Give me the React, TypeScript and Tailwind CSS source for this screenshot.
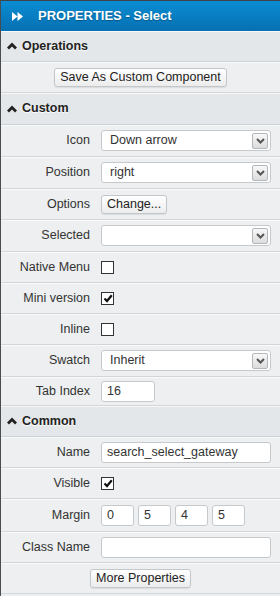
import React from 'react';

const font = { fontFamily: '"Liberation Sans", Arial, sans-serif' };

const SectionHeader = ({ title, h = 'h-[31px]' }: { title: string; h?: string }) => (
  <div className={`${h} flex items-center gap-[5px] pl-[6px] bg-[#e4e7e9] border-b border-[#cdd1d4] shadow-[inset_0_1px_0_#f7f8f9]`}>
    <svg width="10" height="8" viewBox="0 0 10 8">
      <path d="M1 6.5 L5 2.5 L9 6.5" fill="none" stroke="#222" strokeWidth="2.8" />
    </svg>
    <span className="text-[12.5px] font-bold text-[#222] [text-shadow:0_1px_1px_#fff]">{title}</span>
  </div>
);

const Row = ({ label, h = 'h-[31px]', children }: { label?: string; h?: string; children: React.ReactNode }) => (
  <div className={`${h} flex items-center bg-[#edeff0] border-b border-[#d3d6d9] shadow-[inset_0_1px_0_#f9fafa]`}>
    <div className="w-[89px] text-right text-[12.5px] text-[#333]">{label}</div>
    <div className="ml-[11px] flex items-center">{children}</div>
  </div>
);

const Select = ({ value }: { value: string }) => (
  <div className="w-[170px] h-[21px] bg-white border border-[#c6c9cc] rounded-[3px] flex items-center justify-between pl-[8px] pr-[2px]">
    <span className="text-[12.5px] text-[#333]">{value}</span>
    <span className="w-[16px] h-[16px] border border-[#b4b7ba] rounded-[2px] bg-gradient-to-b from-[#f8f8f8] to-[#dcdcdc] flex items-center justify-center">
      <svg width="9" height="6" viewBox="0 0 9 6">
        <path d="M1 1 L4.5 4.5 L8 1" fill="none" stroke="#555" strokeWidth="2" />
      </svg>
    </span>
  </div>
);

const Input = ({ value = '', w }: { value?: string; w: string }) => (
  <div className={`${w} h-[21px] bg-white border border-[#c6c9cc] rounded-[3px] flex items-center pl-[5px] text-[12.5px] text-[#333]`}>
    {value}
  </div>
);

const Check = ({ checked }: { checked?: boolean }) => (
  <span className="w-[13px] h-[13px] bg-white border border-[#333] flex items-center justify-center">
    {checked && (
      <svg width="10" height="9" viewBox="0 0 10 9">
        <path d="M1.5 4.5 L4 7 L8.8 1.2" fill="none" stroke="#111" strokeWidth="2.2" />
      </svg>
    )}
  </span>
);

const Button = ({ children }: { children: React.ReactNode }) => (
  <span className="h-[19px] px-[5px] flex items-center bg-gradient-to-b from-white to-[#ececec] border border-[#c4c7ca] rounded-[3px] text-[12.5px] text-[#222] shadow-[0_1px_1px_rgba(0,0,0,0.08)]">
    {children}
  </span>
);

export default function App() {
  return (
    <div className="w-[280px] h-[596px] bg-[#edeff0] border-l border-[#4a4d50] overflow-hidden" style={font}>
      <div className="h-[31px] border-t border-[#3f4346] bg-gradient-to-b from-[#0b8dd3] to-[#0670b2] flex items-center pl-[11px] gap-[15px]">
        <svg width="11" height="9" viewBox="0 0 11 9">
          <path d="M0 0 L5.5 4.5 L0 9 Z M5.5 0 L11 4.5 L5.5 9 Z" fill="#fff" />
        </svg>
        <span className="text-white font-bold text-[13px] [text-shadow:0_1px_1px_rgba(0,0,0,0.3)]">PROPERTIES - Select</span>
      </div>

      <SectionHeader title="Operations" />
      <div className="h-[31px] flex items-center justify-center bg-[#edeff0] border-b border-[#d3d6d9] shadow-[inset_0_1px_0_#f9fafa]">
        <Button>Save As Custom Component</Button>
      </div>

      <SectionHeader title="Custom" h="h-[32px]" />
      <Row label="Icon" h="h-[32px]"><Select value="Down arrow" /></Row>
      <Row label="Position" h="h-[32px]"><Select value="right" /></Row>
      <Row label="Options"><Button>Change...</Button></Row>
      <Row label="Selected" h="h-[32px]"><Select value="" /></Row>
      <Row label="Native Menu"><Check /></Row>
      <Row label="Mini version"><Check checked /></Row>
      <Row label="Inline"><Check /></Row>
      <Row label="Swatch" h="h-[32px]"><Select value="Inherit" /></Row>
      <Row label="Tab Index" h="h-[29px]"><Input value="16" w="w-[54px]" /></Row>

      <SectionHeader title="Common" />
      <Row label="Name"><Input value="search_select_gateway" w="w-[170px]" /></Row>
      <Row label="Visible"><Check checked /></Row>
      <Row label="Margin" h="h-[33px]">
        <div className="flex gap-[4px]">
          <Input value="0" w="w-[33px]" />
          <Input value="5" w="w-[33px]" />
          <Input value="4" w="w-[33px]" />
          <Input value="5" w="w-[33px]" />
        </div>
      </Row>
      <Row label="Class Name"><Input w="w-[170px]" /></Row>
      <div className="h-[31px] flex items-center justify-center bg-[#edeff0] border-b border-[#d3d6d9] shadow-[inset_0_1px_0_#f9fafa]">
        <Button>More Properties</Button>
      </div>
    </div>
  );
}
